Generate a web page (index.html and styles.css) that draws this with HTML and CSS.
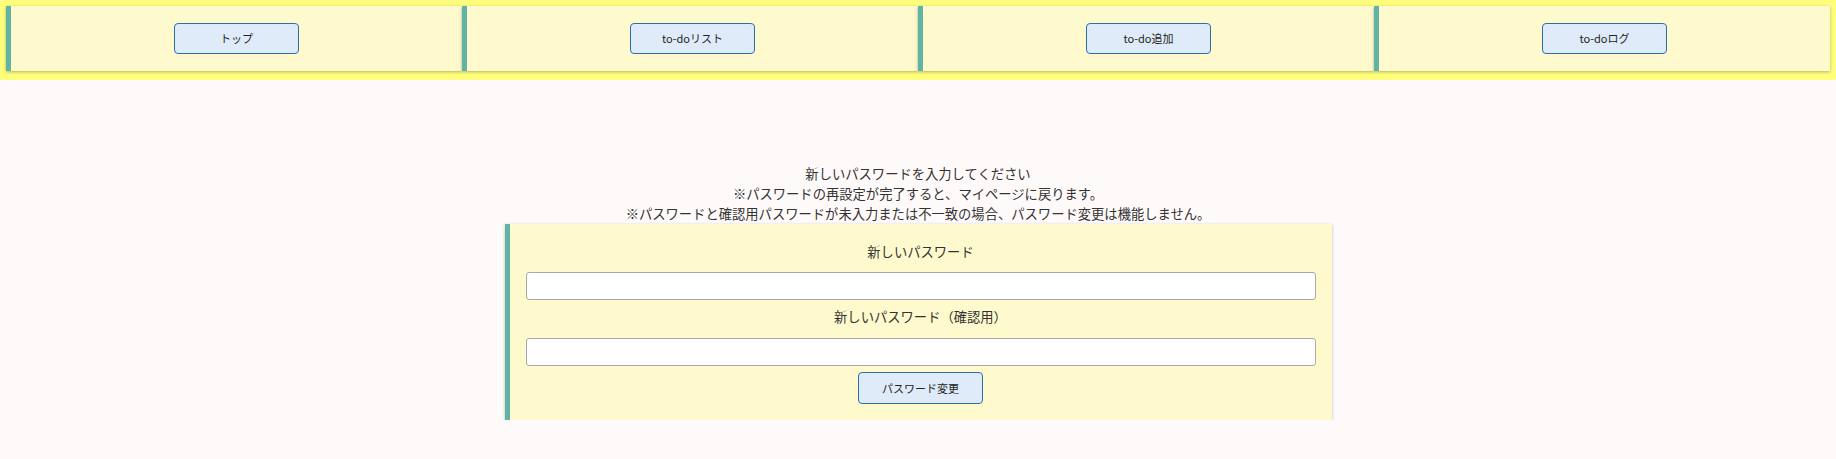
FILE: index.html
```html
<!DOCTYPE html>
<html lang="ja">
<head>
<meta charset="utf-8">
<title>パスワード変更</title>
<link rel="stylesheet" href="styles.css">
</head>
<body>
<header class="nav">
  <div class="nav-item"><button class="btn">トップ</button></div>
  <div class="nav-item"><button class="btn">to-doリスト</button></div>
  <div class="nav-item"><button class="btn">to-do追加</button></div>
  <div class="nav-item"><button class="btn">to-doログ</button></div>
</header>
<main class="main">
  <div class="notes">
    <p>新しいパスワードを入力してください</p>
    <p>※パスワードの再設定が完了すると、マイページに戻ります。</p>
    <p>※パスワードと確認用パスワードが未入力または不一致の場合、パスワード変更は機能しません。</p>
  </div>
  <form class="card">
    <label class="label label-first">新しいパスワード</label>
    <input class="field field-first" type="password">
    <label class="label label-second">新しいパスワード（確認用）</label>
    <input class="field field-second" type="password">
    <button class="btn btn-submit" type="button">パスワード変更</button>
  </form>
</main>
</body>
</html>
```
FILE: styles.css
```css
* { box-sizing: border-box; }
html, body { margin: 0; padding: 0; }
body {
  background: #fffafa;
  font-family: "Noto Sans CJK JP", "Noto Sans", sans-serif;
  color: #333;
  font-size: 13.3px;
  line-height: 20px;
}
.nav {
  background: #ffff7d;
  padding: 6px 6px 9px 6px;
  display: flex;
  height: 80px;
}
.nav-item {
  flex: 1;
  background: #fffacd;
  border-left: 5px solid #5fb4a5;
  box-shadow: 0 1px 3px rgba(0,0,0,0.3);
  display: flex;
  justify-content: center;
  padding-top: 17px;
  height: 65px;
}
.btn {
  width: 125px;
  height: 31px;
  background: #dfebf9;
  border: 1px solid #2a6eb0;
  border-radius: 4px;
  font-family: "Noto Sans CJK JP", "Noto Sans", sans-serif;
  font-size: 11px;
  color: #222;
  padding: 0;
  line-height: 1;
}
.main {
  padding-top: 84px;
  display: flex;
  flex-direction: column;
  align-items: center;
}
.notes { text-align: center; }
.notes p { margin: 0; }
.card {
  width: 827px;
  background: #fffacd;
  border-left: 5px solid #5fb4a5;
  box-shadow: 0 1px 3px rgba(0,0,0,0.25);
  padding: 18px 16px 16px 16px;
  display: flex;
  flex-direction: column;
  align-items: center;
}
.label { display: block; text-align: center; }
.label-second { margin-top: 7px; }
.field {
  width: 100%;
  height: 28px;
  background: #fff;
  border: 1px solid #a9a9a9;
  border-radius: 3px;
}
.field-first { margin-top: 10px; }
.field-second { margin-top: 11px; }
.btn-submit { margin-top: 6px; height: 32px; }
```
